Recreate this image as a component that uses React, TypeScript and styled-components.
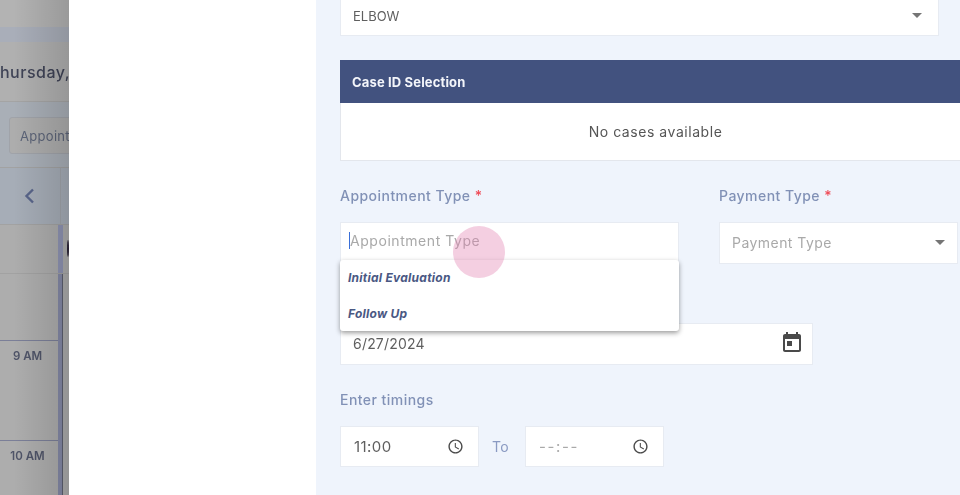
import styled, { createGlobalStyle } from 'styled-components';

const GlobalStyle = createGlobalStyle`
  html, body {
    margin: 0;
    padding: 0;
    height: 100%;
    overflow: hidden;
    background: #fff;
  }
  * {
    box-sizing: border-box;
  }
  body {
    font-family: Inter, "Open Sans", "Liberation Sans", sans-serif;
  }
`;

const Page = styled.div`
  position: relative;
  display: flex;
  width: 960px;
  height: 495px;
  overflow: hidden;
`;

// dimmed calendar behind the drawer
const Backdrop = styled.div`
  position: relative;
  flex: 0 0 69px;
  display: flex;
  flex-direction: column;
  overflow: hidden;
  background: #adadad;
  color: #4b4f5e;
  filter: blur(0.4px);
  &::after {
    content: '';
    position: absolute;
    inset: 0;
    background: linear-gradient(90deg, rgba(0, 0, 0, 0) 20%, rgba(0, 0, 0, 0.14));
  }
`;
const TopGap = styled.div`
  height: 27px;
  background: #b3b3b3;
`;
const Band = styled.div`
  height: 15px;
  background: #a9aeb9;
`;
const DayTitle = styled.div`
  height: 60px;
  display: flex;
  align-items: center;
  margin-left: -11px;
  font-size: 16px;
  font-weight: 500;
  letter-spacing: 0.5px;
  white-space: nowrap;
  color: #3f4356;
  background: #b0b0b0;
  border-bottom: 1px solid #a4a4a4;
`;
const FilterBar = styled.div`
  height: 66px;
  padding: 15px 0 0 9px;
  background: #a9afb7;
  border-bottom: 1px solid #a2a2a2;
`;
const FilterInput = styled.div`
  width: 90px;
  height: 37px;
  padding-left: 10px;
  display: flex;
  align-items: center;
  font-size: 13px;
  letter-spacing: 0.3px;
  color: #5c6478;
  background: #adadad;
  border: 1px solid #a0a3a9;
  border-radius: 3px;
`;
const NavRow = styled.div`
  height: 57px;
  display: flex;
  background: #a6adb7;
  border-bottom: 1px solid #a2a2a2;
`;
const NavCell = styled.div`
  flex: 0 0 61px;
  display: flex;
  align-items: center;
  justify-content: center;
  color: #59658a;
  border-right: 1px solid #a0a4aa;
`;
const AllDayRow = styled.div`
  height: 49px;
  display: flex;
  border-bottom: 1px solid #a2a2a2;
`;
const TimeCol = styled.div<{ $ruled?: boolean }>`
  flex: 0 0 58px;
  padding: 8px 3px 0 0;
  text-align: center;
  font-size: 11.5px;
  font-weight: 600;
  color: #4f5468;
  border-top: ${(p) => (p.$ruled ? '1px solid #7b7f98' : 'none')};
`;
const Rail = styled.div<{ $wide?: boolean }>`
  flex: 0 0 5px;
  background: ${(p) => (p.$wide ? '#8f94b3' : '#8489a6')};
  border-right: ${(p) => (p.$wide ? 'none' : '1px solid #5d6070')};
`;
const EventDot = styled.div`
  margin: 15px 0 0 4px;
  width: 10px;
  height: 17px;
  border-radius: 50%;
  background: #2a2236;
`;
const TimeRow = styled.div<{ $h: number }>`
  height: ${(p) => p.$h}px;
  display: flex;
`;

const Sidebar = styled.div`
  flex: 0 0 247px;
  background: #fff;
`;

const FormPane = styled.div`
  flex: 1;
  min-width: 0;
  padding-left: 24px;
  background: #eff4fc;
  overflow: hidden;
  filter: blur(0.3px);
`;

const Field = styled.div<{ $w: number; $h?: number; $grey?: boolean }>`
  width: ${(p) => p.$w}px;
  height: ${(p) => p.$h ?? 42}px;
  flex: none;
  display: flex;
  align-items: center;
  justify-content: space-between;
  padding: 0 12px;
  font-size: 14px;
  color: ${(p) => (p.$grey ? '#a9a9a9' : '#5f5f5f')};
  letter-spacing: 0.45px;
  background: #fff;
  border: 1px solid #e7ebf2;
`;
const BodySelect = styled(Field)`
  border-top: none;
  padding-bottom: 4px;
  font-size: 13px;
  letter-spacing: 0;
  padding-right: 16px;
`;
const Caret = styled.span`
  width: 0;
  height: 0;
  border-left: 5px solid transparent;
  border-right: 5px solid transparent;
  border-top: 5px solid #757575;
`;
const CaseCard = styled.section`
  width: 630px;
  margin-top: 24px;
  background: #fff;
  border-bottom: 1px solid #e3e6ec;
  border-left: 1px solid #e3e6ec;
`;
const CaseHeader = styled.h3`
  margin: 0 0 0 -1px;
  height: 43px;
  padding-left: 12px;
  display: flex;
  align-items: center;
  font-size: 13px;
  font-weight: 700;
  letter-spacing: 0.15px;
  color: #f3f5fa;
  background: #42527f;
`;
const CaseEmpty = styled.div`
  height: 57px;
  display: flex;
  align-items: center;
  justify-content: center;
  font-size: 14px;
  letter-spacing: 0.55px;
  color: #555;
`;
const TypeRow = styled.div`
  display: flex;
  gap: 40px;
  margin-top: 25px;
`;
const TypeCol = styled.div`
  display: flex;
  flex-direction: column;
  align-items: flex-start;
`;
const Label = styled.label`
  display: block;
  height: 20px;
  line-height: 20px;
  font-size: 14px;
  font-weight: 500;
  letter-spacing: 0.46px;
  color: #8191b6;
`;
const Required = styled.span`
  color: #ef4b57;
`;
const AppointmentInput = styled(Field)`
  margin-top: 16px;
  justify-content: flex-start;
  padding: 0 0 6px 8px;
  letter-spacing: 0.55px;
`;
const PaymentInput = styled(Field)`
  margin-top: 16px;
  padding-bottom: 2px;
`;
const TextCaret = styled.span`
  width: 1px;
  height: 17px;
  background: #3a6fd8;
`;
const Placeholder = styled.span`
  color: #a9a9a9;
`;
const DateInput = styled(Field)`
  margin-top: 59px;
  padding-right: 8px;
  padding-bottom: 2px;
  letter-spacing: 0.2px;
`;
const TimingsLabel = styled(Label)`
  margin-top: 25px;
`;
const TimingsRow = styled.div`
  display: flex;
  align-items: center;
  margin-top: 16px;
`;
const ToLabel = styled.span`
  width: 46px;
  padding-right: 3px;
  text-align: center;
  font-size: 14px;
  letter-spacing: 0.4px;
  color: #8a9ac2;
`;
const TimeField = styled(Field)<{ $spaced?: boolean }>`
  font-size: 15px;
  padding: 0 14px 0 13px;
  letter-spacing: ${(p) => (p.$spaced ? '1.6px' : '0.45px')};
`;
const Icon = styled.svg`
  display: block;
  flex: none;
  fill: #4a4a4a;
`;

// open options list, sits over the fields below
const Menu = styled.ul`
  position: absolute;
  left: 340px;
  top: 260px;
  width: 339px;
  height: 71px;
  margin: 0;
  padding: 0;
  list-style: none;
  background: #fff;
  border-radius: 3px;
  box-shadow: 0 2px 5px rgba(0, 0, 0, 0.4);
`;
const MenuItem = styled.li`
  height: 36px;
  padding: 0 0 2px 8px;
  display: flex;
  align-items: center;
  font-size: 12px;
  font-weight: 700;
  font-style: italic;
  letter-spacing: 0.25px;
  color: #4a5883;
`;
const TouchDot = styled.div`
  position: absolute;
  left: 453px;
  top: 226px;
  width: 52px;
  height: 52px;
  border-radius: 50%;
  background: rgba(226, 130, 175, 0.38);
`;

const CalendarIcon = () => (
  <Icon width="24" height="24" viewBox="0 0 24 24">
    <path d="M19 3h-1V1h-2v2H8V1H6v2H5c-1.11 0-1.99.9-1.99 2L3 19c0 1.1.89 2 2 2h14c1.1 0 2-.9 2-2V5c0-1.1-.9-2-2-2zm0 16H5V8h14v11zM7 10h5v5H7z" />
  </Icon>
);

const ClockIcon = () => (
  <Icon width="17" height="17" viewBox="0 0 24 24">
    <path d="M11.99 2C6.47 2 2 6.48 2 12s4.47 10 9.99 10C17.52 22 22 17.52 22 12S17.52 2 11.99 2zM12 20c-4.42 0-8-3.58-8-8s3.58-8 8-8 8 3.58 8 8-3.58 8-8 8zm.5-13H11v6l5.25 3.15.75-1.23-4.5-2.67z" />
  </Icon>
);

export default function App() {
  return (
    <>
      <GlobalStyle />
      <Page>
        <Backdrop>
          <TopGap />
          <Band />
          <DayTitle>Thursday, June 27</DayTitle>
          <FilterBar>
            <FilterInput>Appointment</FilterInput>
          </FilterBar>
          <NavRow>
            <NavCell>
              <svg width="18" height="18" viewBox="0 0 18 18" fill="none" stroke="currentColor" strokeWidth="2.4">
                <path d="M12 2.5 5.5 9l6.5 6.5" />
              </svg>
            </NavCell>
          </NavRow>
          <AllDayRow>
            <TimeCol />
            <Rail $wide />
            <EventDot />
          </AllDayRow>
          <TimeRow $h={66}>
            <TimeCol />
            <Rail />
          </TimeRow>
          <TimeRow $h={100}>
            <TimeCol $ruled>9 AM</TimeCol>
            <Rail />
          </TimeRow>
          <TimeRow $h={55}>
            <TimeCol $ruled>10 AM</TimeCol>
            <Rail />
          </TimeRow>
        </Backdrop>
        <Sidebar />
        <FormPane>
          <BodySelect $w={599} $h={36}>
            ELBOW
            <Caret />
          </BodySelect>
          <CaseCard>
            <CaseHeader>Case ID Selection</CaseHeader>
            <CaseEmpty>No cases available</CaseEmpty>
          </CaseCard>
          <TypeRow>
            <TypeCol>
              <Label>
                Appointment Type <Required>*</Required>
              </Label>
              <AppointmentInput $w={339}>
                <TextCaret />
                <Placeholder>Appointment Type</Placeholder>
              </AppointmentInput>
            </TypeCol>
            <TypeCol>
              <Label>
                Payment Type <Required>*</Required>
              </Label>
              <PaymentInput $w={239} $grey>
                Payment Type
                <Caret />
              </PaymentInput>
            </TypeCol>
          </TypeRow>
          <DateInput $w={473}>
            6/27/2024
            <CalendarIcon />
          </DateInput>
          <TimingsLabel>Enter timings</TimingsLabel>
          <TimingsRow>
            <TimeField $w={139} $h={41}>
              11:00
              <ClockIcon />
            </TimeField>
            <ToLabel>To</ToLabel>
            <TimeField $w={139} $h={41} $grey $spaced>
              --:--
              <ClockIcon />
            </TimeField>
          </TimingsRow>
        </FormPane>
        <Menu>
          <MenuItem>Initial Evaluation</MenuItem>
          <MenuItem>Follow Up</MenuItem>
        </Menu>
        <TouchDot />
      </Page>
    </>
  );
}
